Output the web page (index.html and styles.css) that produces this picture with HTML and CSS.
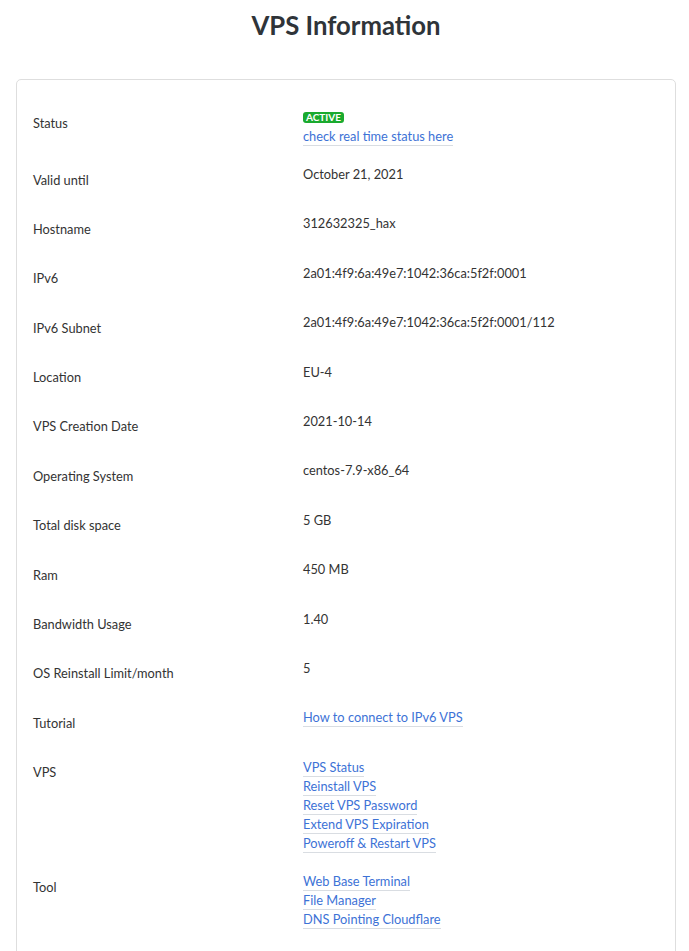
FILE: index.html
```html
<!DOCTYPE html>
<html>
<head>
<meta charset="utf-8">
<link rel="stylesheet" href="styles.css">
</head>
<body>
<h1 class="title">VPS Information</h1>
<div class="card">
  <div class="row">
    <div class="label">Status</div>
    <div class="value">
      <div class="badge-line"><span class="badge">ACTIVE</span></div>
      <a class="link" href="#">check real time status here</a>
    </div>
  </div>
  <div class="row"><div class="label">Valid until</div><div class="value">October 21, 2021</div></div>
  <div class="row"><div class="label">Hostname</div><div class="value">312632325_hax</div></div>
  <div class="row"><div class="label">IPv6</div><div class="value">2a01:4f9:6a:49e7:1042:36ca:5f2f:0001</div></div>
  <div class="row"><div class="label">IPv6 Subnet</div><div class="value">2a01:4f9:6a:49e7:1042:36ca:5f2f:0001/112</div></div>
  <div class="row"><div class="label">Location</div><div class="value">EU-4</div></div>
  <div class="row"><div class="label">VPS Creation Date</div><div class="value">2021-10-14</div></div>
  <div class="row"><div class="label">Operating System</div><div class="value">centos-7.9-x86_64</div></div>
  <div class="row"><div class="label">Total disk space</div><div class="value">5 GB</div></div>
  <div class="row"><div class="label">Ram</div><div class="value">450 MB</div></div>
  <div class="row"><div class="label">Bandwidth Usage</div><div class="value">1.40</div></div>
  <div class="row"><div class="label">OS Reinstall Limit/month</div><div class="value">5</div></div>
  <div class="row"><div class="label">Tutorial</div><div class="value"><a class="link" href="#">How to connect to IPv6 VPS</a></div></div>
  <div class="row">
    <div class="label">VPS</div>
    <div class="value">
      <a class="link" href="#">VPS Status</a>
      <a class="link" href="#">Reinstall VPS</a>
      <a class="link" href="#">Reset VPS Password</a>
      <a class="link" href="#">Extend VPS Expiration</a>
      <a class="link" href="#">Poweroff &amp; Restart VPS</a>
    </div>
  </div>
  <div class="row">
    <div class="label">Tool</div>
    <div class="value">
      <a class="link" href="#">Web Base Terminal</a>
      <a class="link" href="#">File Manager</a>
      <a class="link" href="#">DNS Pointing Cloudflare</a>
    </div>
  </div>
</div>
</body>
</html>
```
FILE: styles.css
```css
html, body {
  margin: 0;
  padding: 0;
  background: #ffffff;
}
body {
  font-family: Lato, "Open Sans", sans-serif;
  font-size: 12.8px;
  color: #333333;
  padding: 0 13px 0 16px;
}
.title {
  margin: 0;
  padding: 8px 0 0;
  height: 72px;
  box-sizing: border-box;
  text-align: center;
  font-size: 25.7px;
  font-weight: 700;
  color: #2f3439;
  line-height: 34px;
}
.card {
  border: 1px solid #dedede;
  border-radius: 5px;
  padding: 19px 16px 20px;
  margin-top: 7px;
}
.row {
  display: grid;
  grid-template-columns: 270px 1fr;
  align-items: start;
}
.label {
  padding: 15px 0 14.9px;
  line-height: 19.5px;
}
.value {
  padding: 9.5px 0 10px;
  line-height: 19px;
  display: flex;
  flex-direction: column;
  align-items: flex-start;
}
.badge-line {
  height: 18px;
  display: flex;
  align-items: center;
}
.badge {
  display: inline-block;
  background: #1aaa2e;
  color: #ffffff;
  font-weight: 700;
  font-size: 10px;
  line-height: 11px;
  padding: 0 3px;
  border-radius: 3px;
}
.link {
  color: #3d72d6;
  text-decoration: none;
  border-bottom: 1px solid #d9dde2;
  line-height: 18px;
}
```
